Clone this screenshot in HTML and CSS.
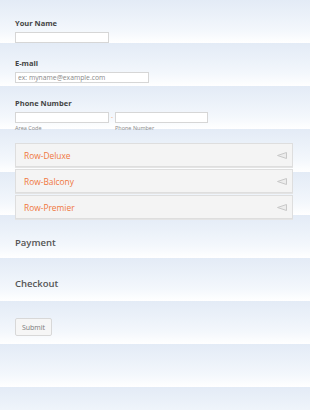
FILE: index.html
```html
<!DOCTYPE html>
<html>
<head>
<meta charset="utf-8">
<link rel="stylesheet" href="styles.css">
</head>
<body>
<form class="form">
  <div class="field f-name">
    <label class="label">Your Name</label>
    <input class="input w-name" type="text">
  </div>
  <div class="field f-email">
    <label class="label">E-mail</label>
    <input class="input w-email" type="text" placeholder="ex: myname@example.com">
  </div>
  <div class="field f-phone">
    <label class="label">Phone Number</label>
    <div class="phone-row">
      <div class="phone-part">
        <input class="input w-area" type="text">
        <span class="sublabel">Area Code</span>
      </div>
      <span class="dash">-</span>
      <div class="phone-part">
        <input class="input w-num" type="text">
        <span class="sublabel">Phone Number</span>
      </div>
    </div>
  </div>
  <div class="cards">
    <div class="card"><span class="card-title">Row-Deluxe</span><svg class="arrow" width="10" height="7" viewBox="0 0 10 7"><polygon points="0.5,3.5 9.5,0.5 9.5,6.5" fill="#ececec" stroke="#c8c8c8" stroke-width="1"/></svg></div>
    <div class="card"><span class="card-title">Row-Balcony</span><svg class="arrow" width="10" height="7" viewBox="0 0 10 7"><polygon points="0.5,3.5 9.5,0.5 9.5,6.5" fill="#ececec" stroke="#c8c8c8" stroke-width="1"/></svg></div>
    <div class="card"><span class="card-title">Row-Premier</span><svg class="arrow" width="10" height="7" viewBox="0 0 10 7"><polygon points="0.5,3.5 9.5,0.5 9.5,6.5" fill="#ececec" stroke="#c8c8c8" stroke-width="1"/></svg></div>
  </div>
  <div class="heading h-pay">Payment</div>
  <div class="heading h-check">Checkout</div>
  <button class="submit" type="button">Submit</button>
</form>
</body>
</html>
```
FILE: styles.css
```css
html, body {
  margin: 0;
  padding: 0;
}
body {
  width: 310px;
  height: 410px;
  overflow: hidden;
  font-family: "Open Sans", "Liberation Sans", sans-serif;
  background-color: #fff;
  background-image: linear-gradient(to bottom, #e3ebf6 0%, #f3f7fc 70%, #ffffff 100%);
  background-size: 100% 43px;
  background-repeat: repeat-y;
}
.form {
  display: flex;
  flex-direction: column;
  align-items: flex-start;
  padding: 0 17px 0 15px;
}
.field {
  display: flex;
  flex-direction: column;
  align-items: flex-start;
}
.f-name { margin-top: 18px; }
.f-email { margin-top: 15px; }
.f-phone { margin-top: 15px; }
.label {
  display: block;
  font-size: 7.5px;
  font-weight: 700;
  color: #444;
  line-height: 10px;
  height: 10px;
  margin-bottom: 4px;
}
.input {
  box-sizing: border-box;
  height: 11px;
  margin: 0;
  padding: 0 2px;
  border: 1px solid #d6d6d6;
  background: #fff;
  font-family: "Open Sans", "Liberation Sans", sans-serif;
  font-size: 6.8px;
  color: #555;
  outline: none;
}
.input::placeholder { color: #8a8a8a; }
.w-name { width: 94px; }
.w-email { width: 134px; }
.w-area { width: 94px; }
.w-num { width: 93px; }
.phone-row {
  display: flex;
  align-items: flex-start;
}
.phone-part {
  display: flex;
  flex-direction: column;
}
.dash {
  width: 6px;
  text-align: center;
  font-size: 6px;
  line-height: 11px;
  color: #f08040;
}
.sublabel {
  font-size: 5.5px;
  line-height: 7px;
  color: #888;
  margin-top: 2px;
}
.cards {
  margin-top: 11px;
  width: 278px;
  display: flex;
  flex-direction: column;
  gap: 2px;
}
.card {
  box-sizing: border-box;
  height: 24px;
  background: #f4f4f4;
  border: 1px solid #dedede;
  box-shadow: 0 1px 0 #e4e4e4;
  display: flex;
  align-items: center;
  justify-content: space-between;
  padding: 0 5px 0 8px;
}
.card-title {
  font-size: 8.4px;
  color: #f0773c;
}
.arrow { display: block; }
.heading {
  font-size: 9.5px;
  font-weight: 600;
  color: #555;
  line-height: 12px;
}
.h-pay { margin-top: 18px; }
.h-check { margin-top: 29px; }
.submit {
  margin-top: 28px;
  box-sizing: border-box;
  width: 37px;
  height: 18px;
  padding: 0;
  border: 1px solid #d8d8d8;
  border-radius: 2px;
  background: #f6f6f6;
  font-family: "Open Sans", "Liberation Sans", sans-serif;
  font-size: 7px;
  color: #7a7a7a;
}
```
